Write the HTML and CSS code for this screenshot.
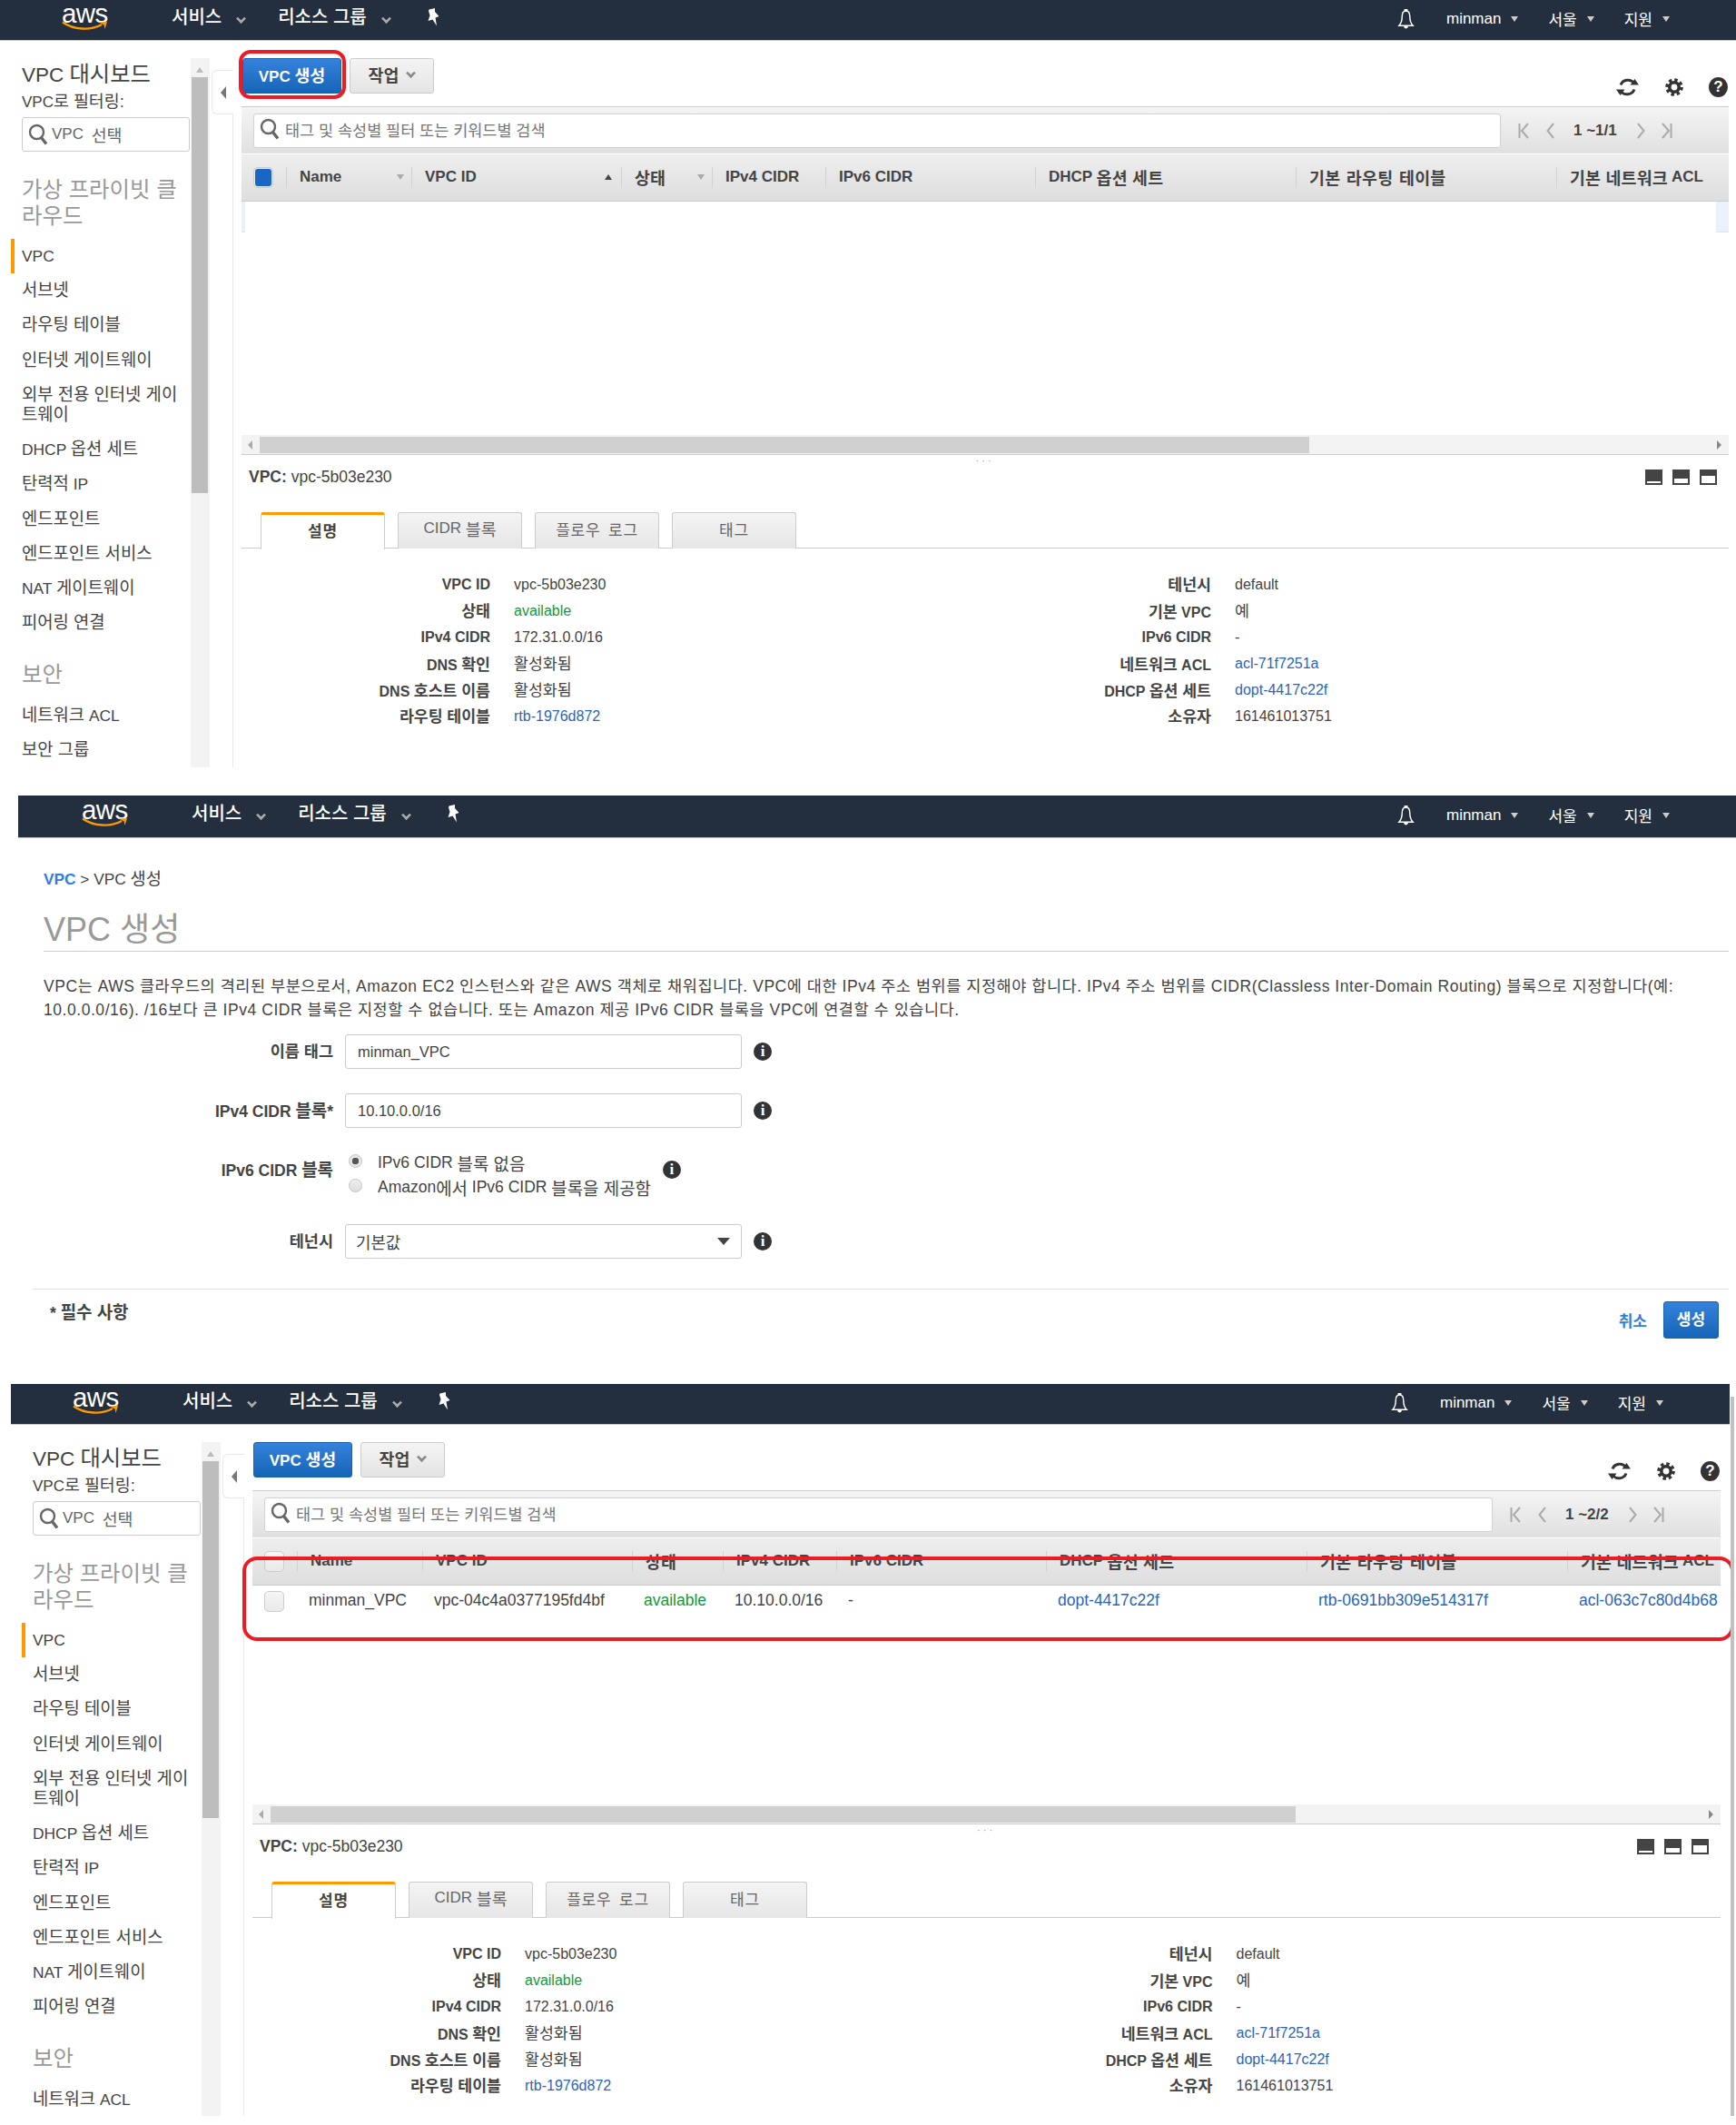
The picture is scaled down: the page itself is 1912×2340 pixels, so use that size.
FILE: index.html

```html
<!DOCTYPE html>
<html lang="ko">
<head>
  <meta charset="UTF-8">
  <title>VPC 생성</title>
  <link rel="stylesheet" href="styles.css">
</head>
<body>
  <!-- icon sprite -->
  <svg class="sprite" xmlns="http://www.w3.org/2000/svg">
    <symbol id="i-smile" viewBox="0 0 52 12">
      <path d="M1 1.5C13 10 32 11 44 4" fill="none" stroke="#f90" stroke-width="2.4"/>
      <path d="M41 1.5L50 .8 47.5 9 46.6 4.4z" fill="#f90"/>
    </symbol>
    <symbol id="i-pin" viewBox="0 0 16 20">
      <path d="M3.5 1.500L10 0 10 4 14.500 9 10.500 10.500 12 19.500 7.500 12.500 2.500 14 4.500 8 3 3z" fill="#fff"/>
    </symbol>
    <symbol id="i-bell" viewBox="0 0 22 24">
      <path d="M11 2.500C7 2.500 6.500 6 6.500 9.500C6.500 14 5.500 17 3 19.500H19C16.500 17 15.500 14 15.500 9.500C15.500 6 15 2.500 11 2.500z" fill="none" stroke="#fff" stroke-width="1.500"/>
      <path d="M9 .5h4v2.500h-4zM8.500 20.500h5a2.500 2.500 0 0 1-5 0z" fill="#fff"/>
    </symbol>
    <symbol id="i-search" viewBox="0 0 22 24">
      <circle cx="9.500" cy="9.500" r="7.500" fill="none" stroke="#666" stroke-width="2.400"/>
      <path d="M14.500 15.500L20 22.500" stroke="#666" stroke-width="3.400"/>
    </symbol>
    <symbol id="i-refresh" viewBox="0 0 27 24">
      <path d="M6 9.500A8.500 8.500 0 0 1 21 8" fill="none" stroke="#333" stroke-width="3"/>
      <path d="M16.500 9.500H26L21.500 3z" fill="#333"/>
      <path d="M21 14.500A8.500 8.500 0 0 1 6 16" fill="none" stroke="#333" stroke-width="3"/>
      <path d="M10.500 14.500H1L5.500 21z" fill="#333"/>
    </symbol>
    <symbol id="i-gear" viewBox="0 0 20 20">
      <circle cx="10" cy="10" r="8" fill="none" stroke="#333" stroke-width="3.600" stroke-dasharray="3.400 2.880"/>
      <circle cx="10" cy="10" r="5.200" fill="none" stroke="#333" stroke-width="3.600"/>
    </symbol>
    <symbol id="i-first" viewBox="0 0 12 18">
      <path d="M1.500 1v16M11 1L4 9l7 8" fill="none" stroke="#aaa" stroke-width="2"/>
    </symbol>
    <symbol id="i-prev" viewBox="0 0 9 18">
      <path d="M8 1L1.500 9 8 17" fill="none" stroke="#aaa" stroke-width="2"/>
    </symbol>
    <symbol id="i-next" viewBox="0 0 9 18">
      <path d="M1 1l6.500 8L1 17" fill="none" stroke="#aaa" stroke-width="2"/>
    </symbol>
    <symbol id="i-last" viewBox="0 0 12 18">
      <path d="M10.500 1v16M1 1l7 8-7 8" fill="none" stroke="#aaa" stroke-width="2"/>
    </symbol>
  </svg>

  <!-- first screen: empty list -->
  <section class="panel panel-list">
    <header class="topbar">
      <div class="logo"><span class="logo-text">aws</span><svg class="logo-smile"><use href="#i-smile"/></svg></div>
      <a class="nav-item nav-first">서비스</a><i class="chev"></i>
      <a class="nav-item nav-second">리소스 그룹</a><i class="chev"></i>
      <svg class="pin"><use href="#i-pin"/></svg>
      <div class="nav-right">
        <svg class="bell"><use href="#i-bell"/></svg>
        <span class="nav-small">minman</span><i class="tri-nav"></i>
        <span class="nav-small">서울</span><i class="tri-nav"></i>
        <span class="nav-small">지원</span><i class="tri-nav"></i>
      </div>
    </header>
    <div class="console">
      <aside class="side">
        <div class="side-body">
          <h3 class="side-title">VPC <span class="ko">대시보드</span></h3>
          <div class="side-filter">VPC<span class="ko">로 필터링:</span></div>
          <div class="side-select"><svg class="side-search"><use href="#i-search"/></svg>VPC <span class="ko">선택</span></div>
          <h4 class="side-group">가상 프라이빗 클라우드</h4>
          <ul class="side-list">
            <li class="active">VPC</li>
            <li class="ko">서브넷</li>
            <li class="ko">라우팅 테이블</li>
            <li class="ko">인터넷 게이트웨이</li>
            <li class="ko">외부 전용 인터넷 게이트웨이</li>
            <li>DHCP <span class="ko">옵션 세트</span></li>
            <li><span class="ko">탄력적</span> IP</li>
            <li class="ko">엔드포인트</li>
            <li class="ko">엔드포인트 서비스</li>
            <li>NAT <span class="ko">게이트웨이</span></li>
            <li class="ko">피어링 연결</li>
          </ul>
          <h4 class="side-group side-group-next">보안</h4>
          <ul class="side-list">
            <li><span class="ko">네트워크</span> ACL</li>
            <li class="ko">보안 그룹</li>
          </ul>
        </div>
        <div class="vscroll"><i class="tri-up"></i><div class="vthumb"></div></div>
      </aside>
      <div class="rail"><div class="rail-tab"><i class="tri-left"></i></div><div class="rail-line"></div></div>
      <main class="main">
        <div class="actions">
          <span class="btn-mark"><button class="btn btn-primary">VPC <span class="ko">생성</span></button></span>
          <button class="btn btn-plain"><span class="ko">작업</span><i class="chev chev-dark"></i></button>
          <div class="tools">
            <svg class="tool-refresh"><use href="#i-refresh"/></svg>
            <svg class="tool-gear"><use href="#i-gear"/></svg>
            <span class="tool-help">?</span>
          </div>
        </div>
        <div class="toolbar">
          <div class="search"><svg class="search-icon"><use href="#i-search"/></svg><span class="ko">태그 및 속성별 필터 또는 키워드별 검색</span></div>
          <div class="pager">
            <svg class="pg-edge"><use href="#i-first"/></svg><svg class="pg-step"><use href="#i-prev"/></svg>
            <span class="pg-count">1 ~1/1</span>
            <svg class="pg-step pg-next"><use href="#i-next"/></svg><svg class="pg-edge pg-last"><use href="#i-last"/></svg>
          </div>
        </div>
        <div class="cols thead">
          <div class="cell-check"><span class="check checked"></span></div>
          <div class="th">Name<i class="tri-sort"></i></div>
          <div class="th">VPC ID<i class="tri-sort tri-sort-up"></i></div>
          <div class="th"><span class="ko">상태</span><i class="tri-sort"></i></div>
          <div class="th">IPv4 CIDR</div>
          <div class="th">IPv6 CIDR</div>
          <div class="th">DHCP <span class="ko">옵션 세트</span></div>
          <div class="th ko">기본 라우팅 테이블</div>
          <div class="th"><span class="ko">기본 네트워크</span> ACL</div>
        </div>
        <div class="tbody"><i class="strip strip-left"></i><i class="strip strip-right"></i></div>
        <div class="hscroll"><i class="tri-left-sm"></i><div class="hthumb"></div><i class="tri-right-sm"></i></div>
        <div class="dots">&middot; &middot; &middot;</div>
        <div class="lower-head">
          <div class="lower-title"><b>VPC:</b> vpc-5b03e230</div>
          <div class="sizes"><i class="size size-s"></i><i class="size size-m"></i><i class="size size-l"></i></div>
        </div>
        <div class="tabs">
          <div class="tab tab-on ko">설명</div>
          <div class="tab">CIDR <span class="ko">블록</span></div>
          <div class="tab ko">플로우 로그</div>
          <div class="tab ko">태그</div>
        </div>
        <div class="details">
          <dl class="detail-col">
            <dt>VPC ID</dt><dd>vpc-5b03e230</dd>
            <dt class="ko">상태</dt><dd class="ok">available</dd>
            <dt>IPv4 CIDR</dt><dd>172.31.0.0/16</dd>
            <dt>DNS <span class="ko">확인</span></dt><dd class="ko">활성화됨</dd>
            <dt>DNS <span class="ko">호스트 이름</span></dt><dd class="ko">활성화됨</dd>
            <dt class="ko">라우팅 테이블</dt><dd class="link">rtb-1976d872</dd>
          </dl>
          <dl class="detail-col detail-col-right">
            <dt class="ko">테넌시</dt><dd>default</dd>
            <dt><span class="ko">기본</span> VPC</dt><dd class="ko">예</dd>
            <dt>IPv6 CIDR</dt><dd>-</dd>
            <dt><span class="ko">네트워크</span> ACL</dt><dd class="link">acl-71f7251a</dd>
            <dt>DHCP <span class="ko">옵션 세트</span></dt><dd class="link">dopt-4417c22f</dd>
            <dt class="ko">소유자</dt><dd>161461013751</dd>
          </dl>
        </div>
      </main>
    </div>
  </section>

  <!-- second screen: create form -->
  <section class="panel panel-form">
    <header class="topbar">
      <div class="logo"><span class="logo-text">aws</span><svg class="logo-smile"><use href="#i-smile"/></svg></div>
      <a class="nav-item nav-first">서비스</a><i class="chev"></i>
      <a class="nav-item nav-second">리소스 그룹</a><i class="chev"></i>
      <svg class="pin"><use href="#i-pin"/></svg>
      <div class="nav-right">
        <svg class="bell"><use href="#i-bell"/></svg>
        <span class="nav-small">minman</span><i class="tri-nav"></i>
        <span class="nav-small">서울</span><i class="tri-nav"></i>
        <span class="nav-small">지원</span><i class="tri-nav"></i>
      </div>
    </header>
    <div class="page">
      <div class="crumb"><a>VPC</a> &gt; VPC <span class="ko">생성</span></div>
      <h1 class="page-title">VPC 생성</h1>
      <p class="intro">VPC는 AWS 클라우드의 격리된 부분으로서, Amazon EC2 인스턴스와 같은 AWS 객체로 채워집니다. VPC에 대한 IPv4 주소 범위를 지정해야 합니다. IPv4 주소 범위를 CIDR(Classless Inter-Domain Routing) 블록으로 지정합니다(예:<br>10.0.0.0/16). /16보다 큰 IPv4 CIDR 블록은 지정할 수 없습니다. 또는 Amazon 제공 IPv6 CIDR 블록을 VPC에 연결할 수 있습니다.</p>
      <div class="form-row">
        <label class="ko">이름 태그</label>
        <input class="field" type="text" value="minman_VPC">
        <span class="info">i</span>
      </div>
      <div class="form-row">
        <label>IPv4 CIDR <span class="ko">블록</span>*</label>
        <input class="field" type="text" value="10.10.0.0/16">
        <span class="info">i</span>
      </div>
      <div class="form-row form-row-radio">
        <label>IPv6 CIDR <span class="ko">블록</span></label>
        <div class="radios">
          <div class="radio-line"><i class="radio radio-on"></i>IPv6 CIDR <span class="ko">블록 없음</span></div>
          <div class="radio-line"><i class="radio"></i>Amazon<span class="ko">에서</span> IPv6 CIDR <span class="ko">블록을 제공함</span></div>
        </div>
        <span class="info">i</span>
      </div>
      <div class="form-row form-row-select">
        <label class="ko">테넌시</label>
        <div class="field field-select"><span class="ko">기본값</span><i class="tri-select"></i></div>
        <span class="info">i</span>
      </div>
    </div>
    <footer class="form-foot">
      <b class="required">* <span class="ko">필수 사항</span></b>
      <a class="cancel ko">취소</a>
      <button class="btn btn-primary btn-create ko">생성</button>
    </footer>
  </section>

  <!-- third screen: list with the new VPC -->
  <section class="panel panel-result">
    <header class="topbar">
      <div class="logo"><span class="logo-text">aws</span><svg class="logo-smile"><use href="#i-smile"/></svg></div>
      <a class="nav-item nav-first">서비스</a><i class="chev"></i>
      <a class="nav-item nav-second">리소스 그룹</a><i class="chev"></i>
      <svg class="pin"><use href="#i-pin"/></svg>
      <div class="nav-right">
        <svg class="bell"><use href="#i-bell"/></svg>
        <span class="nav-small">minman</span><i class="tri-nav"></i>
        <span class="nav-small">서울</span><i class="tri-nav"></i>
        <span class="nav-small">지원</span><i class="tri-nav"></i>
      </div>
    </header>
    <div class="console">
      <aside class="side">
        <div class="side-body">
          <h3 class="side-title">VPC <span class="ko">대시보드</span></h3>
          <div class="side-filter">VPC<span class="ko">로 필터링:</span></div>
          <div class="side-select"><svg class="side-search"><use href="#i-search"/></svg>VPC <span class="ko">선택</span></div>
          <h4 class="side-group">가상 프라이빗 클라우드</h4>
          <ul class="side-list">
            <li class="active">VPC</li>
            <li class="ko">서브넷</li>
            <li class="ko">라우팅 테이블</li>
            <li class="ko">인터넷 게이트웨이</li>
            <li class="ko">외부 전용 인터넷 게이트웨이</li>
            <li>DHCP <span class="ko">옵션 세트</span></li>
            <li><span class="ko">탄력적</span> IP</li>
            <li class="ko">엔드포인트</li>
            <li class="ko">엔드포인트 서비스</li>
            <li>NAT <span class="ko">게이트웨이</span></li>
            <li class="ko">피어링 연결</li>
          </ul>
          <h4 class="side-group side-group-next">보안</h4>
          <ul class="side-list">
            <li><span class="ko">네트워크</span> ACL</li>
          </ul>
        </div>
        <div class="vscroll"><i class="tri-up"></i><div class="vthumb"></div></div>
      </aside>
      <div class="rail"><div class="rail-tab"><i class="tri-left"></i></div><div class="rail-line"></div></div>
      <main class="main">
        <div class="actions">
          <button class="btn btn-primary">VPC <span class="ko">생성</span></button>
          <button class="btn btn-plain"><span class="ko">작업</span><i class="chev chev-dark"></i></button>
          <div class="tools">
            <svg class="tool-refresh"><use href="#i-refresh"/></svg>
            <svg class="tool-gear"><use href="#i-gear"/></svg>
            <span class="tool-help">?</span>
          </div>
        </div>
        <div class="toolbar">
          <div class="search"><svg class="search-icon"><use href="#i-search"/></svg><span class="ko">태그 및 속성별 필터 또는 키워드별 검색</span></div>
          <div class="pager">
            <svg class="pg-edge"><use href="#i-first"/></svg><svg class="pg-step"><use href="#i-prev"/></svg>
            <span class="pg-count">1 ~2/2</span>
            <svg class="pg-step pg-next"><use href="#i-next"/></svg><svg class="pg-edge pg-last"><use href="#i-last"/></svg>
          </div>
        </div>
        <div class="table-wrap">
          <div class="cols thead">
            <div class="cell-check"><span class="check"></span></div>
            <div class="th">Name</div>
            <div class="th">VPC ID</div>
            <div class="th"><span class="ko">상태</span></div>
            <div class="th">IPv4 CIDR</div>
            <div class="th">IPv6 CIDR</div>
            <div class="th">DHCP <span class="ko">옵션 세트</span></div>
            <div class="th ko">기본 라우팅 테이블</div>
            <div class="th"><span class="ko">기본 네트워크</span> ACL</div>
          </div>
          <div class="tbody">
            <div class="cols trow">
              <div class="cell-check"><span class="check"></span></div>
              <div class="td">minman_VPC</div>
              <div class="td">vpc-04c4a0377195fd4bf</div>
              <div class="td ok">available</div>
              <div class="td">10.10.0.0/16</div>
              <div class="td">-</div>
              <div class="td link">dopt-4417c22f</div>
              <div class="td link">rtb-0691bb309e514317f</div>
              <div class="td link">acl-063c7c80d4b68</div>
            </div>
          </div>
          <div class="row-mark"></div>
        </div>
        <div class="hscroll"><i class="tri-left-sm"></i><div class="hthumb"></div><i class="tri-right-sm"></i></div>
        <div class="dots">&middot; &middot; &middot;</div>
        <div class="lower-head">
          <div class="lower-title"><b>VPC:</b> vpc-5b03e230</div>
          <div class="sizes"><i class="size size-s"></i><i class="size size-m"></i><i class="size size-l"></i></div>
        </div>
        <div class="tabs">
          <div class="tab tab-on ko">설명</div>
          <div class="tab">CIDR <span class="ko">블록</span></div>
          <div class="tab ko">플로우 로그</div>
          <div class="tab ko">태그</div>
        </div>
        <div class="details">
          <dl class="detail-col">
            <dt>VPC ID</dt><dd>vpc-5b03e230</dd>
            <dt class="ko">상태</dt><dd class="ok">available</dd>
            <dt>IPv4 CIDR</dt><dd>172.31.0.0/16</dd>
            <dt>DNS <span class="ko">확인</span></dt><dd class="ko">활성화됨</dd>
            <dt>DNS <span class="ko">호스트 이름</span></dt><dd class="ko">활성화됨</dd>
            <dt class="ko">라우팅 테이블</dt><dd class="link">rtb-1976d872</dd>
          </dl>
          <dl class="detail-col detail-col-right">
            <dt class="ko">테넌시</dt><dd>default</dd>
            <dt><span class="ko">기본</span> VPC</dt><dd class="ko">예</dd>
            <dt>IPv6 CIDR</dt><dd>-</dd>
            <dt><span class="ko">네트워크</span> ACL</dt><dd class="link">acl-71f7251a</dd>
            <dt>DHCP <span class="ko">옵션 세트</span></dt><dd class="link">dopt-4417c22f</dd>
            <dt class="ko">소유자</dt><dd>161461013751</dd>
          </dl>
        </div>
      </main>
    </div>
    <div class="page-scroll"></div>
  </section>
</body>
</html>
```

FILE: styles.css

```css
* {
  box-sizing: border-box;
}
html, body {
  margin: 0;
  padding: 0;
}
body {
  width: 1912px;
  height: 2340px;
  overflow: hidden;
  background: #fff;
  color: #444;
  font-family: "Liberation Sans", "Noto Sans CJK KR", sans-serif;
  font-size: 16px;
}
i {
  display: block;
  flex: none;
}
ul, dl, dd, h1, h3, h4, p {
  margin: 0;
  padding: 0;
}
.sprite {
  display: none;
}
.ko {
  font-size: 1.08em;
}
.ok {
  color: #12993c;
}
.link {
  color: #2a66b8;
}

/* screens */
.panel {
  position: relative;
}
.panel-list {
  width: 1912px;
  height: 845px;
}
.panel-form {
  width: 1892px;
  height: 648px;
  margin: 31px 0 0 20px;
}
.panel-result {
  width: 1900px;
  height: 816px;
  margin-left: 12px;
}

/* top bar */
.topbar {
  display: flex;
  align-items: center;
  height: 45px;
  padding-left: 67px;
  padding-right: 73px;
  background: #232f3e;
  border-bottom: 1px solid #c8c8c8;
  color: #fff;
}
.panel-form .topbar {
  height: 47px;
  padding-left: 69px;
}
.panel-result .topbar {
  margin-right: 7px;
}
.logo {
  position: relative;
  width: 52px;
  height: 44px;
  flex: none;
}
.logo-text {
  display: block;
  margin: -2px 0 0 1px;
  font-size: 30px;
  line-height: 34px;
  letter-spacing: -.5px;
  transform: scaleX(.98);
  transform-origin: left;
}
.logo-smile {
  position: absolute;
  left: 1px;
  top: 23px;
  width: 52px;
  height: 12px;
}
.nav-item {
  margin-bottom: 9px;
  font-size: 20px;
  font-weight: 500;
  white-space: nowrap;
}
.nav-first {
  margin-left: 70px;
}
.nav-second {
  margin-left: 36px;
}
.chev {
  width: 9px;
  height: 9px;
  margin: 0 0 4px 17px;
  border-right: 3px solid #aaa;
  border-bottom: 3px solid #aaa;
  transform: rotate(45deg) scale(.85);
}
.pin {
  width: 16px;
  height: 20px;
  margin: 0 0 7px 39px;
  flex: none;
}
.nav-right {
  display: flex;
  align-items: center;
  margin-left: auto;
}
.bell {
  width: 21px;
  height: 24px;
  margin: -2px 34px 0 0;
}
.nav-small {
  margin-bottom: 3px;
  font-size: 17px;
  white-space: nowrap;
}
.tri-nav {
  width: 0;
  height: 0;
  margin: 0 33px 2px 11px;
  border: 4px solid transparent;
  border-top: 6px solid #ccc;
  border-bottom: 0;
}
.tri-nav:last-child {
  margin-right: 0;
}

/* console layout */
.console {
  display: flex;
  height: 800px;
  padding-top: 19px;
  overflow: hidden;
}
.panel-result .console {
  height: 761px;
}
.side {
  display: flex;
  width: 219px;
  margin-left: 12px;
  flex: none;
}
.side-body {
  width: 198px;
  overflow: hidden;
}
.side-title {
  padding: 5px 0 0 12px;
  font-size: 22.500px;
  font-weight: 400;
  line-height: 26px;
  color: #444;
}
.side-filter {
  margin-top: 5px;
  padding-left: 12px;
  font-size: 17px;
  line-height: 22px;
}
.side-select {
  display: flex;
  align-items: center;
  gap: 4px;
  width: 185px;
  height: 38px;
  margin: 5px 0 0 12px;
  padding-left: 6px;
  border: 1px solid #ccc;
  border-radius: 3px;
  color: #666;
  font-size: 17px;
  white-space: pre;
}
.side-search {
  width: 22px;
  height: 24px;
  flex: none;
}
.side-group {
  margin-top: 28px;
  padding-left: 12px;
  color: #999;
  font-size: 24.400px;
  font-weight: 400;
  line-height: 28.500px;
}
.side-group-next {
  margin-top: 24px;
}
.side-list {
  margin-top: 11px;
  list-style: none;
  font-size: 17.400px;
  line-height: 22.200px;
}
.side-list li {
  padding: 8px 0 8px 12px;
}
.side-list li.active {
  border-left: 4px solid #f90;
  padding-left: 8px;
}
.vscroll {
  position: relative;
  width: 21px;
  flex: none;
  background: #f3f3f3;
}
.tri-up {
  position: absolute;
  left: 6px;
  top: 10px;
  width: 0;
  height: 0;
  border: 4.500px solid transparent;
  border-bottom: 6px solid #bbb;
  border-top: 0;
}
.vthumb {
  position: absolute;
  left: 1px;
  top: 21px;
  width: 18px;
  height: 458px;
  background: #bdbdbd;
}
.panel-result .vthumb {
  height: 393px;
}
.rail {
  display: flex;
  flex-direction: column;
  width: 24px;
  margin-left: 2px;
  padding-top: 13px;
  flex: none;
}
.rail-tab {
  display: flex;
  align-items: center;
  justify-content: center;
  height: 49px;
  border: 1px solid #e8e8e8;
  border-right: 0;
  border-radius: 6px 0 0 6px;
}
.tri-left {
  width: 0;
  height: 0;
  border: 7px solid transparent;
  border-right: 6px solid #777;
  border-left: 0;
}
.rail-line {
  flex: 1;
  border-right: 1px solid #e8e8e8;
}
.main {
  flex: 1;
  min-width: 0;
  margin: 0 8px 0 9px;
}
.panel-result .main {
  margin-right: 17px;
}

/* action row */
.actions {
  display: flex;
  height: 53px;
  align-items: flex-start;
}
.btn {
  height: 39px;
  padding: 0 0 4px;
  border-radius: 3px;
  font-family: inherit;
  font-size: 17px;
  font-weight: 700;
  white-space: pre;
}
.btn-primary {
  width: 109px;
  margin-left: 1px;
  border: 1px solid #1a62b0;
  background: linear-gradient(#3582dc, #1565b7);
  color: #fff;
}
.btn-plain {
  display: flex;
  align-items: center;
  justify-content: center;
  width: 93px;
  margin-left: 9px;
  border: 1px solid #ccc;
  background: linear-gradient(#f4f4f4, #e4e4e4);
  color: #444;
}
.btn-mark {
  position: relative;
  display: block;
  height: 39px;
  flex: none;
}
.btn-mark::after {
  content: "";
  position: absolute;
  top: -9px;
  right: -5px;
  bottom: -6px;
  left: -3px;
  border: 4px solid #ed1c24;
  border-radius: 13px;
}
.chev-dark {
  margin: 0 0 2px 9px;
  border-color: #888;
}
.tools {
  display: flex;
  align-items: center;
  margin-left: auto;
  height: 22px;
  margin-top: 21px;
  margin-right: 1px;
}
.tool-refresh {
  width: 27px;
  height: 24px;
}
.tool-gear {
  width: 20px;
  height: 20px;
  margin-left: 28px;
}
.tool-help {
  width: 21px;
  height: 22px;
  margin-left: 28px;
  border-radius: 50%;
  background: #333;
  color: #fff;
  font-size: 17px;
  font-weight: 700;
  line-height: 22px;
  text-align: center;
}

/* filter toolbar */
.toolbar {
  display: flex;
  align-items: center;
  height: 52px;
  padding-left: 13px;
  border-top: 1px solid #ccc;
  background: linear-gradient(#f4f4f4, #e0e0e0);
}
.search {
  display: flex;
  align-items: center;
  flex: 1;
  height: 38px;
  padding: 0 0 3px 6px;
  border: 1px solid #d2d2d2;
  border-radius: 3px;
  background: #fff;
  color: #777;
  font-size: 16.200px;
}
.search-icon {
  width: 22px;
  height: 24px;
  margin-right: 6px;
  flex: none;
}
.pager {
  display: flex;
  align-items: center;
  width: 251px;
  padding-left: 19px;
  font-size: 17px;
}
.pg-edge {
  width: 12px;
  height: 18px;
  flex: none;
}
.pg-step {
  width: 9px;
  height: 18px;
  margin-left: 19px;
  flex: none;
}
.pg-count {
  width: 48px;
  margin-left: 21px;
  font-weight: 700;
  white-space: nowrap;
}
.pg-step.pg-next {
  margin-left: 22px;
}
.pg-last {
  margin-left: 18px;
}

/* table */
.table-wrap {
  position: relative;
}
.cols {
  display: grid;
  grid-template-columns: 49px 138px 231px 100px 125px 231px 287px 287px minmax(0, 1fr);
  align-items: center;
}
.thead {
  height: 53px;
  border-top: 1px solid #fff;
  border-bottom: 1px solid #ccc;
  background: linear-gradient(#eeeeee, #dedede);
  overflow: hidden;
}
.cell-check {
  display: flex;
  padding-left: 13px;
}
.check {
  display: block;
  width: 22px;
  height: 23px;
  border: 1px solid #ccc;
  border-radius: 5px;
  background: linear-gradient(#f6f6f6, #e9e9e9);
}
.check.checked {
  border: 2px solid #e9e9e9;
  outline: 1px solid #ccc;
  outline-offset: -1px;
  background: #1a66c4;
  box-shadow: inset 0 0 0 1px #1a66c4;
}
.th {
  display: flex;
  align-items: center;
  height: 23px;
  padding: 0 0 1px 14px;
  border-left: 1px solid #d2d2d2;
  font-size: 17px;
  font-weight: 700;
  white-space: pre;
}
.th .ko {
  letter-spacing: .2px;
}
.th.ko {
  font-size: 18.400px;
  letter-spacing: .3px;
  word-spacing: 1px;
}
.tri-sort {
  margin-left: auto;
  margin-right: 8px;
  width: 0;
  height: 0;
  border: 4px solid transparent;
  border-top: 6px solid #aaa;
  border-bottom: 0;
}
.tri-sort-up {
  margin-right: 10px;
  border-top: 0;
  border-bottom: 6px solid #444;
}
.tbody {
  position: relative;
  height: 257px;
}
.panel-result .tbody {
  height: 241px;
}
.strip {
  position: absolute;
  top: 0;
  width: 4px;
  height: 34px;
  background: #eaf1fb;
  border-bottom: 1px solid #e4e4e4;
}
.strip-left {
  left: 0;
}
.strip-right {
  right: 0;
  width: 14px;
}
.trow {
  height: 34px;
  font-size: 17.500px;
}
.td {
  padding: 0 0 2px 13px;
  white-space: nowrap;
}
.row-mark {
  position: absolute;
  top: 21px;
  left: -11px;
  right: -15px;
  height: 93px;
  border: 4px solid #ed1c24;
  border-radius: 16px;
}
.hscroll {
  display: flex;
  align-items: center;
  height: 22px;
  padding-left: 7px;
  border-bottom: 1px solid #ccc;
  background: #f3f3f3;
}
.hthumb {
  width: 1156px;
  height: 18px;
  margin-left: 8px;
  background: #d0d0d0;
}
.panel-result .hthumb {
  width: 1129px;
}
.tri-left-sm {
  width: 0;
  height: 0;
  border: 5px solid transparent;
  border-right: 5px solid #aaa;
  border-left: 0;
}
.tri-right-sm {
  margin-left: auto;
  margin-right: 8px;
  width: 0;
  height: 0;
  border: 5px solid transparent;
  border-left: 5px solid #888;
  border-right: 0;
}
.dots {
  height: 12px;
  padding-right: 4px;
  color: #999;
  font-size: 11px;
  line-height: 12px;
  text-align: center;
}

/* lower pane */
.lower-head {
  display: flex;
  align-items: center;
  justify-content: space-between;
  height: 24px;
  padding: 0 8px;
  font-size: 17.500px;
}
.sizes {
  display: flex;
  gap: 11px;
  margin-right: 5px;
}
.size {
  position: relative;
  width: 19px;
  height: 17px;
  background: #444;
}
.size::after {
  content: "";
  position: absolute;
  left: 2px;
  right: 2px;
  bottom: 2px;
  background: #fff;
}
.size-s::after {
  height: 2px;
}
.size-m::after {
  height: 5px;
}
.size-l::after {
  height: 8px;
}
.tabs {
  display: flex;
  gap: 14px;
  height: 40px;
  margin-top: 27px;
  padding-left: 21px;
  border-bottom: 1px solid #ccc;
}
.tab {
  display: flex;
  align-items: center;
  justify-content: center;
  width: 137px;
  height: 40px;
  padding-bottom: 5px;
  border: 1px solid #ccc;
  border-bottom: 0;
  border-radius: 3px 3px 0 0;
  background: linear-gradient(#f4f4f4, #e6e6e6);
  color: #666;
  font-size: 17px;
  white-space: pre;
}
.tab.ko {
  letter-spacing: .8px;
  word-spacing: 3px;
}
.tab.tab-on {
  height: 41px;
  border-top: 3px solid #f90;
  background: #fff;
  color: #444;
  font-weight: 700;
}
.details {
  display: grid;
  grid-template-columns: 1fr 1fr;
  margin-top: 25px;
}
.detail-col {
  display: grid;
  grid-template-columns: 274px 1fr;
  column-gap: 26px;
  grid-auto-rows: 29px;
  align-items: center;
  font-size: 16px;
}
.detail-col-right {
  grid-template-columns: 249px 1fr;
}
.detail-col dt {
  text-align: right;
  font-weight: 700;
  white-space: pre;
}
.detail-col dt.ko,
.detail-col dd.ko {
  padding-bottom: 3px;
}

/* create form */
.page {
  padding: 0 8px 0 28px;
}
.crumb {
  margin-top: 33px;
  font-size: 17.300px;
  line-height: 24px;
}
.crumb a {
  color: #2d7fe0;
  font-weight: 700;
}
.page-title {
  height: 68px;
  padding-top: 24px;
  border-bottom: 1px solid #ccc;
  color: #999;
  font-size: 36px;
  font-weight: 400;
  line-height: 40px;
}
.intro {
  margin-top: 25px;
  font-size: 17.500px;
  line-height: 26px;
  letter-spacing: .55px;
  white-space: nowrap;
}
.form-row {
  display: flex;
  align-items: center;
  height: 38px;
  margin-top: 27px;
  margin-left: -28px;
}
.intro + .form-row {
  margin-top: 14px;
}
.form-row label {
  width: 347px;
  margin-right: 13px;
  padding-bottom: 3px;
  font-size: 17.500px;
  font-weight: 700;
  text-align: right;
  white-space: pre;
}
.field {
  display: flex;
  align-items: center;
  justify-content: space-between;
  width: 437px;
  height: 38px;
  padding: 0 13px;
  border: 1px solid #ccc;
  border-radius: 3px;
  background: #fff;
  color: #444;
  font-family: inherit;
  font-size: 16.500px;
}
.field-select {
  padding-left: 11px;
}
.tri-select {
  margin-right: -1px;
  width: 0;
  height: 0;
  border: 7px solid transparent;
  border-top: 8px solid #444;
  border-bottom: 0;
}
.info {
  width: 20px;
  height: 20px;
  margin-left: 13px;
  border-radius: 50%;
  background: #333;
  color: #fff;
  font-family: "Liberation Serif", serif;
  font-size: 17px;
  font-weight: 700;
  line-height: 20px;
  text-align: center;
}
.form-row-radio {
  height: 46px;
  margin-top: 23px;
}
.radios {
  margin-top: 11px;
}
.radio-line {
  display: flex;
  align-items: center;
  height: 27px;
  font-size: 17.500px;
  white-space: pre;
}
.radio {
  width: 15px;
  height: 15px;
  margin: -3px 17px 0 4px;
  border: 1px solid #c4c4c4;
  border-radius: 50%;
  background: linear-gradient(#eee, #ddd);
}
.radio-on {
  background: radial-gradient(circle, #555 0 3.500px, #e6e6e6 4px);
}
.form-row-select {
  margin-top: 37px;
}
.form-foot {
  display: flex;
  align-items: flex-start;
  height: 64px;
  margin: 33px 8px 0 16px;
  padding-top: 14px;
  border-top: 1px solid #e2e2e2;
}
.required {
  margin: 0 auto 0 19px;
  font-size: 17.500px;
  line-height: 24px;
}
.cancel {
  margin: 7px 18px 0 0;
  color: #2d7fe0;
  font-size: 17px;
  font-weight: 700;
}
.btn-create {
  width: 61px;
  height: 41px;
  margin: -1px 11px 0 0;
}

.page-scroll {
  position: absolute;
  top: 14px;
  right: 2px;
  width: 4px;
  bottom: 10px;
  background: #c0c0c0;
}
```
